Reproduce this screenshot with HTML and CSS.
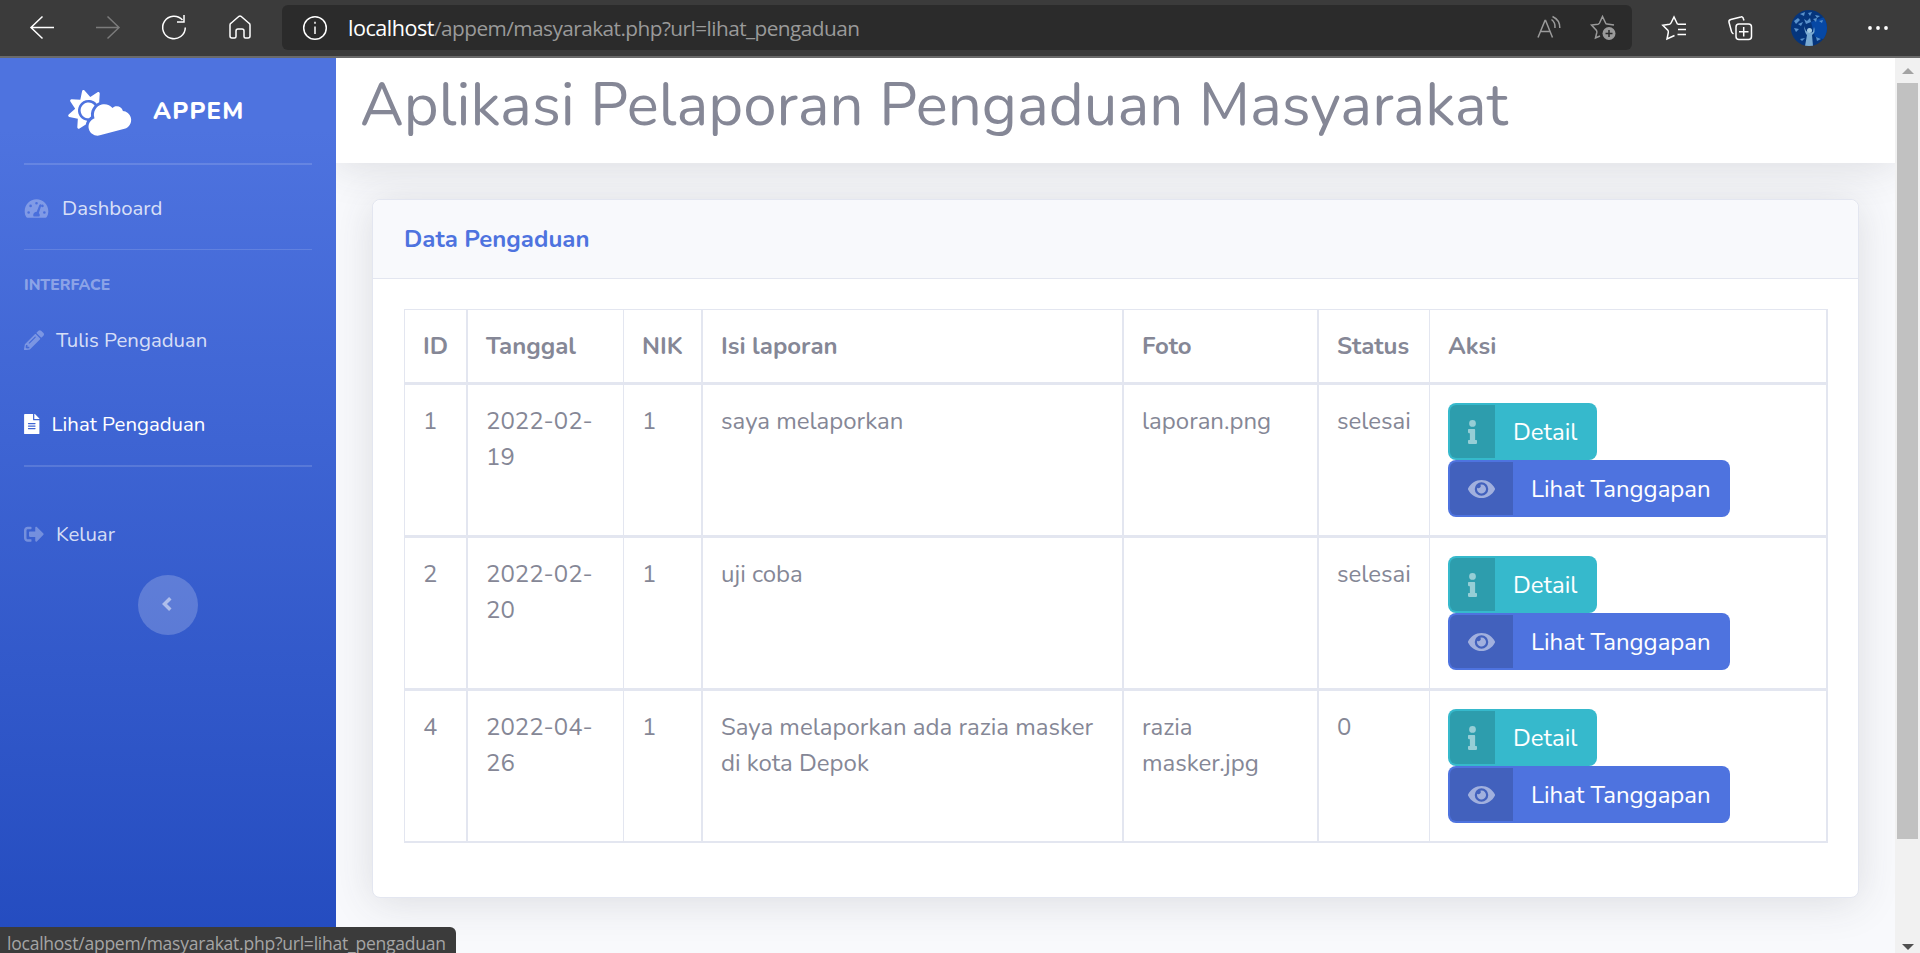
FILE: index.html
```html
<!DOCTYPE html>
<html lang="id">
<head>
<meta charset="utf-8">
<title>APPEM</title>
<link rel="stylesheet" href="styles.css">
</head>
<body>
<header class="toolbar">
  <div class="nav-icons">
    <svg class="ico" viewBox="0 0 24 24"><path d="M24 12.5H.8M12.500 1.500L1 12.500L12.500 23.500"/></svg>
    <svg class="ico dim" viewBox="0 0 24 24"><path d="M0 12.500H23.200M11.500 1.500L23 12.500L11.500 23.500"/></svg>
    <svg class="ico" viewBox="0 0 24 24"><path d="M20.500 5A11.300 11.300 0 1 0 23.300 12.500M22 0V7H15"/></svg>
    <svg class="ico" viewBox="0 0 24 24"><path d="M2 10Q2 9 3 8.200L11 1.300Q12 .5 13 1.300L21 8.200Q22 9 22 10V21Q22 23 20 23H17.500Q16 23 16 21.500V16Q16 14 14 14H10Q8 14 8 16V21.500Q8 23 6.500 23H4Q2 23 2 21Z"/></svg>
  </div>
  <div class="address">
    <svg class="ico info" viewBox="0 0 24 24"><circle cx="12" cy="12" r="11.300"/><path d="M12 10.500V18M12 5.800V7.800"/></svg>
    <div class="url"><b>localhost</b>/appem/masyarakat.php?url=lihat_pengaduan</div>
    <svg class="ico gray read" viewBox="0 0 24 24"><path d="M1 21.500L8 4.500H8.600L15.500 21.500M3.500 15.500H13M14.500 3.500Q18.500 6.500 18 12M15.500 .5Q23 4 22.800 12"/></svg>
    <svg class="ico gray add" viewBox="0 0 26 26"><path d="M24 10L17 9Q16 9 15.700 8.200L12.500 1.500L9.500 8Q9 9 8 9.200L1.500 10L6.500 15.500Q7 16.500 6.800 17.500L5.500 23L10 21"/><circle class="fillgray" cx="19" cy="18.500" r="6.500"/><path class="cut" d="M19 15V22M15.500 18.500H22.500"/></svg>
  </div>
  <div class="actions">
    <svg class="ico" viewBox="0 0 24 24"><path d="M15.500 8.300H24M16 13.500H24M15.500 18.500H24M15.500 8.300L12 1L9 7Q8.500 8 7.500 8.200L.8 9.200L6 14.500Q6.500 15.500 6.300 16.500L5 23L12.500 19.500"/></svg>
    <svg class="ico" viewBox="0 0 24 24"><rect x="8" y="8" width="15.500" height="15.500" rx="3"/><path d="M15.700 11V20.500M11 15.700H20.500M16 4.500L15.300 2.500Q14.800 .4 12.800 1L2.800 3.500Q.5 4.200 1 6.200L3.500 15.500Q4 17 5.500 18"/></svg>
    <svg class="avatar" viewBox="0 0 36 36"><defs><clipPath id="round"><circle cx="18" cy="18" r="18"/></clipPath></defs><g clip-path="url(#round)"><rect width="36" height="36" fill="#05357c"/><path d="M20 12L36 6V30L24 27Z" fill="#0648a5"/><path d="M3 11l4-3 2 2-4 4zM9 4l5-2-1 4zM17 3l4-1-2 4zM24 5l5 1-3 2zM7 14l5-2-2 4zM13 9l3 2 3-3 1 4-5 2zM22 9l4-1-1 4zM28 11l4-1-1 3zM3 18l5 1-3 3zM9 29l5-1-3 3zM25 27l5 2-4 2z" fill="#5991cb"/><path d="M13 16Q14 24 16 25L14 36H22L21 25Q25 22 23 17L22 22L19 23L17 22L15 21Z" fill="#79aad2"/><circle cx="18.500" cy="20.500" r="2.500" fill="#a3c9e2"/></g></svg>
    <svg class="dots" viewBox="0 0 20 4"><circle cx="2" cy="2" r="1.900"/><circle cx="10" cy="2" r="1.900"/><circle cx="18" cy="2" r="1.900"/></svg>
  </div>
</header>

<div class="page">
  <aside class="sidebar">
    <div class="brand">
      <svg class="brand-icon" viewBox="0 0 640 512"><path d="M144.700 303c-43.700-43.700-43.700-114.700 0-158.300 43.700-43.700 114.700-43.700 158.400 0 9.700 9.700 16.900 20.900 22.300 32.700 9.800-3.700 20.100-6 30.700-7.500L386 81.100c4-11.900-7.300-23.100-19.200-19.200L279 91.200 237.500 8.400C232-2.800 216-2.800 210.400 8.400L169 91.200 81.100 61.900C69.300 58 58 69.300 61.900 81.100l29.300 87.800-82.800 41.500c-11.200 5.600-11.200 21.500 0 27.100l82.800 41.400-29.300 87.800c-4 11.900 7.300 23.100 19.200 19.200l76.100-25.300c6.100-12.400 14-23.700 23.600-33.500-13-5.400-25.400-13.400-36.100-24.100zm-4.800-79.200c0 40.800 29.300 74.800 67.900 82.300 8-4.700 16.300-8.800 25.200-11.700 5.400-44.300 31-82.500 67.400-105C287.300 160.400 258 140 223.800 140c-46.300 0-83.900 37.600-83.900 83.800z"/><path d="M575.200 325.700c.2-1.900.8-3.700.8-5.600 0-35.300-28.700-64-64-64-12.600 0-24.200 3.800-34.100 10-17.600-38.800-56.500-66-101.900-66-61.800 0-112 50.100-112 112 0 3 .7 5.800.9 8.700-49.600 3.700-88.900 44.700-88.900 95.300 0 53 43 96 96 96h272c53 0 96-43 96-96 0-42.100-27.200-77.400-64.800-90.400z"/></svg>
      <span class="brand-text">APPEM</span>
    </div>
    <hr class="divider">
    <a class="item dashboard"><svg viewBox="0 0 576 512"><path fill-rule="evenodd" d="M288 32C129 32 0 161 0 320c0 53 14 102 39 145 6 9 16 15 28 15h442c12 0 22-6 28-15 25-43 39-92 39-145C576 161 447 32 288 32zM288 96a32 32 0 1 1 0 64 32 32 0 0 1 0-64zM96 384a32 32 0 1 1 0-64 32 32 0 0 1 0 64zM144 224a32 32 0 1 1 0-64 32 32 0 0 1 0 64zM391 152c13 4 20 18 15 31l-61 183c14 14 23 30 23 50 0 12-3 22-9 32H217c-6-10-9-20-9-32 0-44 40-79 85-80l67-169c5-13 18-20 31-15zM432 224a32 32 0 0 1-19-58 32 32 0 1 1 19 58zM480 384a32 32 0 1 1 0-64 32 32 0 0 1 0 64z"/></svg><span>Dashboard</span></a>
    <hr class="divider second">
    <div class="section">INTERFACE</div>
    <a class="item write"><svg viewBox="0 0 512 512"><path fill-rule="evenodd" d="M498 142l-46 46c-5 5-13 5-17 0L324 77c-5-5-5-12 0-17l46-46c19-19 49-19 68 0l60 60c19 19 19 49 0 68zM284 100L22 362 .4 484c-3 16 12 30 28 28l122-21 262-262c5-5 5-12 0-17L301 100c-5-5-12-5-17 0zM124 340c-5-6-5-14 0-20l154-154c6-5 14-5 20 0s5 14 0 20L144 340c-6 5-14 5-20 0zM88 424h48v36l-64 11-31-31 11-64h36z"/></svg><span>Tulis Pengaduan</span></a>
    <a class="item active"><svg viewBox="0 0 384 512"><path fill-rule="evenodd" d="M224 136V0H24C11 0 0 11 0 24v464c0 13 11 24 24 24h336c13 0 24-11 24-24V160H248c-13 0-24-11-24-24zM288 372c0 7-5 12-12 12H108c-7 0-12-5-12-12v-8c0-7 5-12 12-12h168c7 0 12 5 12 12zM288 308c0 7-5 12-12 12H108c-7 0-12-5-12-12v-8c0-7 5-12 12-12h168c7 0 12 5 12 12zM288 236c0-7-5-12-12-12H108c-7 0-12 5-12 12v8c0 7 5 12 12 12h168c7 0 12-5 12-12zM384 122v6H256V0h6c6 0 12 3 17 7l98 98c4 4 7 11 7 17z"/></svg><span>Lihat Pengaduan</span></a>
    <hr class="divider third">
    <a class="item logout"><svg viewBox="0 0 512 512"><path d="M497 273L329 441c-15 15-41 4.500-41-17v-96H152c-13 0-24-11-24-24v-96c0-13 11-24 24-24h136V88c0-21 26-32 41-17l168 168c9 9 9 25 0 34zM192 436v-40c0-7-5-12-12-12H96c-18 0-32-14-32-32V160c0-18 14-32 32-32h84c7 0 12-5 12-12V76c0-7-5-12-12-12H96c-53 0-96 43-96 96v192c0 53 43 96 96 96h84c7 0 12-5 12-12z"/></svg><span>Keluar</span></a>
    <button class="collapse"><svg viewBox="0 0 10 16"><path d="M8.300 2.300L2.500 8L8.300 13.700"/></svg></button>
  </aside>

  <main class="content">
    <div class="topbar"><h1>Aplikasi Pelaporan Pengaduan Masyarakat</h1></div>
    <section class="card">
      <div class="card-header"><h6>Data Pengaduan</h6></div>
      <div class="card-body">
        <table class="data">
          <colgroup><col class="c-id"><col class="c-date"><col class="c-nik"><col class="c-text"><col class="c-photo"><col class="c-status"><col class="c-action"></colgroup>
          <thead><tr><th>ID</th><th>Tanggal</th><th>NIK</th><th>Isi laporan</th><th>Foto</th><th>Status</th><th>Aksi</th></tr></thead>
          <tbody>
            <tr><td>1</td><td>2022-02-<br>19</td><td>1</td><td>saya melaporkan</td><td>laporan.png</td><td>selesai</td><td><a class="btn info-btn"><i><svg viewBox="0 0 192 512"><use href="#i-info"/></svg></i><span>Detail</span></a><a class="btn view-btn"><i><svg viewBox="0 0 576 512"><use href="#i-eye"/></svg></i><span>Lihat Tanggapan</span></a></td></tr>
            <tr><td>2</td><td>2022-02-<br>20</td><td>1</td><td>uji coba</td><td></td><td>selesai</td><td><a class="btn info-btn"><i><svg viewBox="0 0 192 512"><use href="#i-info"/></svg></i><span>Detail</span></a><a class="btn view-btn"><i><svg viewBox="0 0 576 512"><use href="#i-eye"/></svg></i><span>Lihat Tanggapan</span></a></td></tr>
            <tr><td>4</td><td>2022-04-<br>26</td><td>1</td><td>Saya melaporkan ada razia masker<br>di kota Depok</td><td>razia<br>masker.jpg</td><td>0</td><td><a class="btn info-btn"><i><svg viewBox="0 0 192 512"><use href="#i-info"/></svg></i><span>Detail</span></a><a class="btn view-btn"><i><svg viewBox="0 0 576 512"><use href="#i-eye"/></svg></i><span>Lihat Tanggapan</span></a></td></tr>
          </tbody>
        </table>
      </div>
    </section>
  </main>

  <div class="scrollbar">
    <svg class="arrow up" viewBox="0 0 12 6"><path d="M0 6L6 0L12 6Z"/></svg>
    <div class="thumb"></div>
    <svg class="arrow down" viewBox="0 0 12 6"><path d="M0 0L6 6L12 0Z"/></svg>
  </div>
</div>

<div class="status-tip">localhost/appem/masyarakat.php?url=lihat_pengaduan</div>

<svg class="defs" width="0" height="0"><defs>
  <path id="i-info" d="M20 424h20V280H20c-11 0-20-9-20-20v-48c0-11 9-20 20-20h112c11 0 20 9 20 20v212h20c11 0 20 9 20 20v48c0 11-9 20-20 20H20c-11 0-20-9-20-20v-48c0-11 9-20 20-20zM96 0a72 72 0 1 0 0 144A72 72 0 0 0 96 0z"/>
  <path id="i-eye" fill-rule="evenodd" d="M572.500 241.400C518.300 135.600 410.900 64 288 64S57.700 135.600 3.500 241.400a32.400 32.400 0 0 0 0 29.200C57.700 376.400 165.100 448 288 448s230.300-71.600 284.500-177.400a32.400 32.400 0 0 0 0-29.200zM288 400a144 144 0 1 1 144-144 143.900 143.900 0 0 1-144 144zM288 160a95.300 95.300 0 0 0-25.300 3.800 47.900 47.900 0 0 1-66.900 66.900A95.800 95.800 0 1 0 288 160z"/>
</defs></svg>
</body>
</html>
```
FILE: styles.css
```css
* { box-sizing: border-box; }
body {
  margin: 0;
  width: 1920px;
  height: 953px;
  overflow: hidden;
  position: relative;
  background: #f8f9fc;
  color: #858796;
  font: 24px/36px Nunito, Lato, "Noto Sans", sans-serif;
}

/* Browser toolbar */
.toolbar {
  height: 58px;
  display: flex;
  align-items: flex-start;
  background: #3b3b3b;
  border-bottom: 2px solid #6a6a6a;
}
.ico { width: 24px; height: 24px; fill: none; stroke: #fff; stroke-width: 1.5; overflow: visible; flex: none; }
.dim { stroke: #7b7b7b; }
.gray { stroke: #9a9a9a; }
.nav-icons { width: 282px; padding: 15px 0 0 30px; display: flex; gap: 42px; }
.address {
  width: 1350px;
  height: 45px;
  margin-top: 5px;
  padding: 0 16px 0 21px;
  display: flex;
  align-items: center;
  background: #2b2b2b;
  border-radius: 6px;
}
.url { margin-left: 21px; flex: 1; font: 20.800px/30px "Open Sans", sans-serif; color: #9a9a9a; letter-spacing: -.55px; white-space: nowrap; }
.url b { color: #fff; font-weight: 400; font-size: 21.600px; letter-spacing: -.5px; }
.read { margin-right: 29px; }
.add { width: 26px; height: 26px; }
.fillgray { fill: #9a9a9a; stroke: none; }
.cut { stroke: #2b2b2b; }
.actions { flex: 1; display: flex; align-items: center; padding: 10px 0 0 30px; }
.actions .ico + .ico { margin-left: 42px; }
.avatar { width: 36px; height: 36px; margin-left: 39px; }
.dots { width: 20px; height: 4px; margin-left: 41px; fill: #fff; }

.page { display: flex; height: 895px; }

/* Sidebar */
.sidebar {
  width: 336px;
  padding: 0 24px;
  display: flex;
  flex-direction: column;
  background: linear-gradient(180deg, #4e73df 0%, #4e73df 8%, #224abe 103%);
  position: relative;
  z-index: 2;
}
.brand { height: 105px; padding-left: 44px; display: flex; align-items: center; }
.brand-icon { width: 60px; height: 48px; fill: #fff; transform: rotate(-15deg); overflow: visible; }
.brand-text { margin-left: 25px; color: #fff; font-size: 24px; font-weight: 800; letter-spacing: 1.200px; }
.divider { width: 288px; margin: 0; border: 0; height: 2px; background: rgba(255,255,255,.14); flex: none; }
.item { display: flex; align-items: center; height: 48px; color: rgba(255,255,255,.8); font-size: 20.400px; line-height: 30px; white-space: nowrap; }
.item svg { fill: rgba(255,255,255,.3); height: 20.400px; flex: none; }
.dashboard { margin-top: 19px; }
.dashboard svg { width: 25px; height: 21px; }
.dashboard span { margin-left: 13px; }
.second { margin-top: 17px; height: 1px; }
.section { margin-top: 22px; height: 26px; font-size: 15.600px; line-height: 26px; font-weight: 800; color: rgba(255,255,255,.4); }
.write { margin-top: 18px; }
.write svg { width: 20px; }
.write span { margin-left: 12px; }
.active { margin-top: 36px; color: #fff; }
.active svg { width: 15.500px; fill: #fff; }
.active span { margin-left: 12px; }
.third { margin-top: 17px; }
.logout { margin-top: 43px; }
.logout svg { width: 20px; }
.logout span { margin-left: 12px; }
.collapse {
  width: 60px;
  height: 60px;
  margin: 17px auto 0;
  padding: 0 2px 2px 0;
  border: 0;
  border-radius: 50%;
  display: flex;
  align-items: center;
  justify-content: center;
  background: rgba(255,255,255,.2);
}
.collapse svg { width: 10px; height: 16px; fill: none; stroke: rgba(255,255,255,.5); stroke-width: 3.500; }

/* Main content */
.content { width: 1559px; overflow: hidden; }
.topbar {
  height: 105px;
  padding: 11px 24px 0;
  background: #fff;
  box-shadow: 0 4px 42px rgba(58,59,69,.15);
}
h1 { margin: 0; font-size: 60px; line-height: 72px; font-weight: 400; white-space: nowrap; }
.card {
  margin: 36px 36px 0;
  height: 699px;
  position: relative;
  background: #fff;
  border: 1px solid #e3e6f0;
  border-radius: 8px;
  box-shadow: 0 4px 42px rgba(58,59,69,.15);
}
.card-header { height: 79px; padding: 20px 31px; background: #f8f9fc; border-bottom: 1px solid #e3e6f0; border-radius: 8px 8px 0 0; }
h6 { margin: 0; font-size: 24px; line-height: 38px; font-weight: 700; color: #4e73df; }
.card-body { padding: 30px 30px 30px 31px; }
.data { width: 1424px; table-layout: fixed; border-spacing: 0; border: solid #e3e6f0; border-width: 1px 0 0 1px; }
.c-id { width: 63px; }
.c-date { width: 156px; }
.c-nik { width: 79px; }
.c-text { width: 421px; }
.c-photo { width: 195px; }
.c-status { width: 111px; }
.c-action { width: 398px; }
.data th, .data td { padding: 18px; text-align: left; vertical-align: top; border: solid #e3e6f0; border-width: 0 2px 3px 0; white-space: nowrap; }
.data th { height: 75px; font-weight: 700; }
.data td { height: 153px; }
.data th:nth-child(2), .data td:nth-child(2), .data th:nth-child(6), .data td:nth-child(6) { border-right-width: 1px; }
.data tr:last-child td { border-bottom-width: 2px; height: 152px; }
.btn { display: flex; width: max-content; height: 57px; padding: 2px; border-radius: 8px; color: #fff; line-height: 55px; }
.btn i { display: flex; align-items: center; justify-content: center; height: 53px; background: rgba(0,0,0,.15); border-radius: 6px 0 0 6px; }
.btn svg { height: 24px; fill: rgba(255,255,255,.5); }
.btn span { padding-left: 18px; }
.info-btn { width: 149px; background: #36b9cc; }
.info-btn i { width: 45px; }
.info-btn svg { width: 9px; }
.view-btn { width: 282px; background: #4e73df; }
.view-btn i { width: 63px; }
.view-btn svg { width: 27px; }

/* Window scrollbar */
.scrollbar { width: 25px; background: #f1f1f1; display: flex; flex-direction: column; align-items: center; padding: 10px 0 3px; }
.arrow { width: 12px; height: 6px; }
.up { fill: #a3a3a3; }
.down { margin-top: auto; fill: #505050; }
.thumb { width: 21px; height: 756px; margin-top: 9px; background: #c1c1c1; }

.status-tip {
  position: absolute;
  z-index: 3;
  left: 0;
  top: 927px;
  width: 456px;
  height: 26px;
  padding-left: 7px;
  overflow: hidden;
  background: #3b3b3b;
  border-radius: 0 6px 0 0;
  color: #a5a5a5;
  font: 17.500px/33px "Open Sans", sans-serif;
  letter-spacing: -.23px;
  white-space: nowrap;
}
.defs { position: absolute; }
```
